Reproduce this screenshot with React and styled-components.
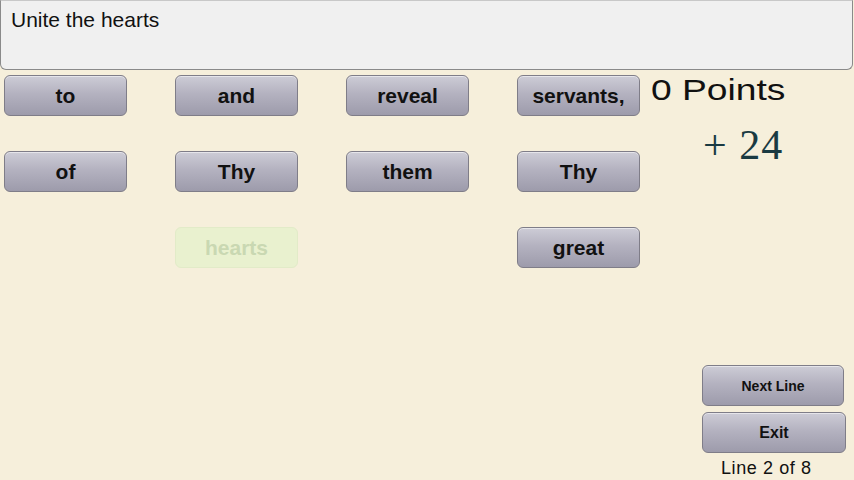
import React from "react";
import styled, { createGlobalStyle } from "styled-components";

const Global = createGlobalStyle`
  html, body { margin: 0; padding: 0; }
  body { background: #f6efdb; font-family: "Liberation Sans", Arial, sans-serif; }
  #root { width: 854px; height: 480px; overflow: hidden; }
`;

const Screen = styled.div`
  width: 854px;
  height: 480px;
  display: flex;
  flex-direction: column;
  background: #f6efdb;
`;

const Prompt = styled.div`
  box-sizing: border-box;
  width: 853px;
  height: 70px;
  background: #f0f0f0;
  border: 1px solid #8a8a8a;
  border-radius: 0 0 6px 6px;
  border-top-color: #c8c8c8;
  padding: 7px 10px;
  font-size: 21px;
  color: #111;
  line-height: 24px;
`;

const Main = styled.div`
  flex: 1;
  display: flex;
  padding: 5px 0 0 4px;
`;

const WordGrid = styled.div`
  display: grid;
  grid-template-columns: repeat(4, 123px);
  grid-auto-rows: 41px;
  column-gap: 48px;
  row-gap: 35px;
  align-content: start;
`;

const WordButton = styled.div`
  box-sizing: border-box;
  display: flex;
  align-items: center;
  justify-content: center;
  border-radius: 6px;
  font-weight: bold;
  font-size: ${(p) => p.$size || 21}px;
  padding-top: 1px;
  ${(p) =>
    p.$faded
      ? `
    background: #e9f1cf;
    border: 1px solid #e2ebc8;
    color: #c9d8b2;
  `
      : `
    background: linear-gradient(#cdccd6 0%, #b4b2c0 45%, #9d9bab 100%);
    border: 1px solid #7f7d88;
    color: #111;
    box-shadow: inset 0 1px 0 rgba(255,255,255,0.5);
  `}
`;

const Empty = styled.div``;

const Side = styled.div`
  flex: 1;
  display: flex;
  flex-direction: column;
  padding-left: 11px;
`;

const Points = styled.div`
  font-size: 30px;
  line-height: 30px;
  color: #111;
  transform: scaleX(1.24);
  transform-origin: left center;
  white-space: nowrap;
`;

const Bonus = styled.div`
  font-family: "Liberation Serif", "Times New Roman", serif;
  font-size: 42px;
  line-height: 42px;
  letter-spacing: 1px;
  color: #1a3a42;
  margin: 19px 0 0 52px;
`;

const Controls = styled.div`
  margin-top: auto;
  display: flex;
  flex-direction: column;
  align-items: flex-start;
  padding-left: 51px;
  padding-bottom: 4px;
  gap: 6px;
`;

const ControlButton = styled(WordButton)`
  width: ${(p) => p.$w}px;
  height: 41px;
`;

const LineInfo = styled.div`
  font-size: 18px;
  line-height: 16px;
  letter-spacing: 0.6px;
  color: #111;
  margin: 1px 0 0 19px;
  white-space: nowrap;
`;

const cells = [
  "to", "and", "reveal", "servants,",
  "of", "Thy", "them", "Thy",
  null, { t: "hearts", faded: true }, null, "great",
];

export default function App() {
  return (
    <Screen>
      <Global />
      <Prompt>Unite the hearts</Prompt>
      <Main>
        <WordGrid>
          {cells.map((c, i) =>
            c === null ? (
              <Empty key={i} />
            ) : typeof c === "string" ? (
              <WordButton key={i}>{c}</WordButton>
            ) : (
              <WordButton key={i} $faded>
                {c.t}
              </WordButton>
            )
          )}
        </WordGrid>
        <Side>
          <Points>0 Points</Points>
          <Bonus>+ 24</Bonus>
          <Controls>
            <ControlButton $w={142} $size={14}>Next Line</ControlButton>
            <ControlButton $w={144} $size={16}>Exit</ControlButton>
            <LineInfo>Line 2 of 8</LineInfo>
          </Controls>
        </Side>
      </Main>
    </Screen>
  );
}
